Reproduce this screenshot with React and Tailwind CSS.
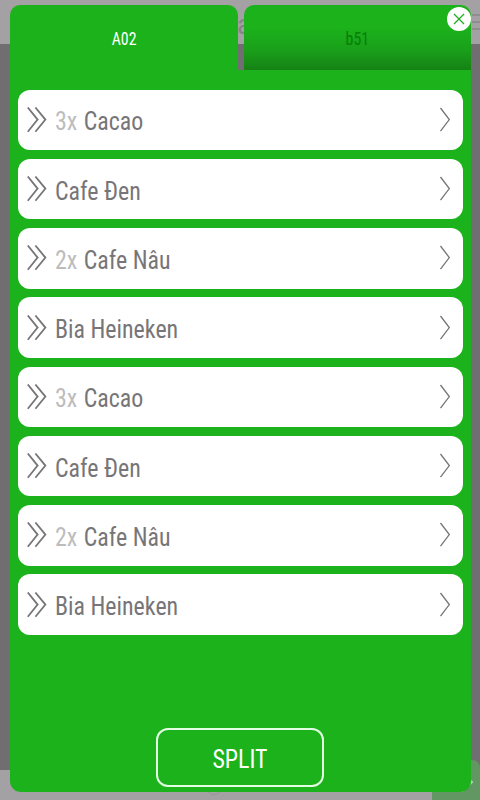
const items = [
  { qty: 3, name: "Cacao" },
  { name: "Cafe Đen" },
  { qty: 2, name: "Cafe Nâu" },
  { name: "Bia Heineken" },
  { qty: 3, name: "Cacao" },
  { name: "Cafe Đen" },
  { qty: 2, name: "Cafe Nâu" },
  { name: "Bia Heineken" },
];

function DoubleChevron() {
  return (
    <svg className="ml-[9px] h-[26px] w-5 shrink-0" viewBox="0 0 20 26" fill="none" stroke="#777577" strokeWidth="1.8">
      <path d="M.8 .5L10.6 12.6L.8 24.7M8.4 .5L18.4 12.6L8.4 24.7" />
    </svg>
  );
}

function Item({ qty, name }) {
  return (
    <li className="flex h-[60.5px] items-center rounded-xl bg-white pr-[12px]">
      <DoubleChevron />
      <span className="ml-[8.5px] mt-[3px] flex-1 origin-left scale-x-[0.92] whitespace-nowrap text-[26px] leading-8 text-[#777577] [font-stretch:75%]">
        {qty && <span className="mr-px text-[#bdbcbd]">{qty}x </span>}
        {name}
      </span>
      <svg className="h-[26px] w-3 shrink-0" viewBox="0 0 12 26" fill="none" stroke="#777577" strokeWidth="1.3">
        <path d="M1.5 1L10.3 12.6L1.5 24.2" />
      </svg>
    </li>
  );
}

function Backdrop() {
  return (
    <div className="absolute inset-0 flex flex-col bg-[#706e71]">
      <div className="relative h-11 bg-[#a3a1a3]">
        <span className="absolute left-[237px] top-[9px] text-[28px] leading-8 text-[#858385] [font-stretch:75%]">a</span>
        <div className="absolute right-0 top-[14px] flex w-2 flex-col gap-[5px]">
          <i className="h-0.5 bg-[#8f8d8f]" />
          <i className="h-0.5 bg-[#8f8d8f]" />
          <i className="h-0.5 bg-[#8f8d8f]" />
        </div>
      </div>
      <div className="flex-1" />
      <div className="relative h-[30px] bg-[#a3a1a3]">
        <div className="absolute left-[205px] top-[7px] h-[18px] w-[18px] rounded-full border border-[#989598]" />
        <div className="absolute -top-[10px] left-[432px] h-10 w-12 rounded-tr-lg bg-[#629662]" />
        <svg className="absolute left-[458px] top-[2px] h-5 w-4" viewBox="0 0 16 20" fill="none" stroke="#b9cdb9" strokeWidth="2">
          <path d="M3 20L14 10L3 1" />
        </svg>
      </div>
    </div>
  );
}

export default function App() {
  return (
    <div className="relative h-[800px] w-[480px] overflow-hidden font-[Roboto,sans-serif]">
      <Backdrop />
      <div className="relative flex h-full flex-col pb-[8.5px] pl-[10px] pr-[9.5px] pt-[4.5px]">
        <div className="flex h-[65px] shrink-0 gap-[6px] text-[18px] [font-stretch:75%]">
          <div className="flex w-[227.5px] items-center justify-center rounded-t-[10px] bg-[#1bb21b] pt-[3px] text-white">
            <span className="scale-x-[0.88]">A02</span>
          </div>
          <div className="relative flex flex-1 items-center justify-center rounded-t-[10px] bg-linear-to-b from-[#1bb21b] from-35% via-[#1a9f1a] via-70% to-[#158215] pt-[3px] text-[#087d08]">
            <span className="scale-x-[0.88]">b51</span>
            <button className="absolute -right-[0.5px] top-[2px] flex size-[24px] items-center justify-center rounded-full bg-white">
              <svg className="size-3" viewBox="0 0 12 12" stroke="#1fae1f" strokeWidth="1.3">
                <path d="M1 1L11 11M11 1L1 11" />
              </svg>
            </button>
          </div>
        </div>
        <div className="flex flex-1 flex-col items-center rounded-b-[11px] bg-[#1bb21b] pb-[4.5px] pl-[7.5px] pr-[7.5px] pt-5">
          <ul className="flex w-full flex-col gap-[8.75px]">
            {items.map((item, i) => (
              <Item key={i} {...item} />
            ))}
          </ul>
          <button className="mt-auto h-[59px] w-[168px] rounded-[12px] border-2 border-[#e3ffe3] pt-[3px] text-[26px] leading-8 text-white [font-stretch:75%]">
            <span className="inline-block scale-x-[0.92]">SPLIT</span>
          </button>
        </div>
      </div>
    </div>
  );
}
